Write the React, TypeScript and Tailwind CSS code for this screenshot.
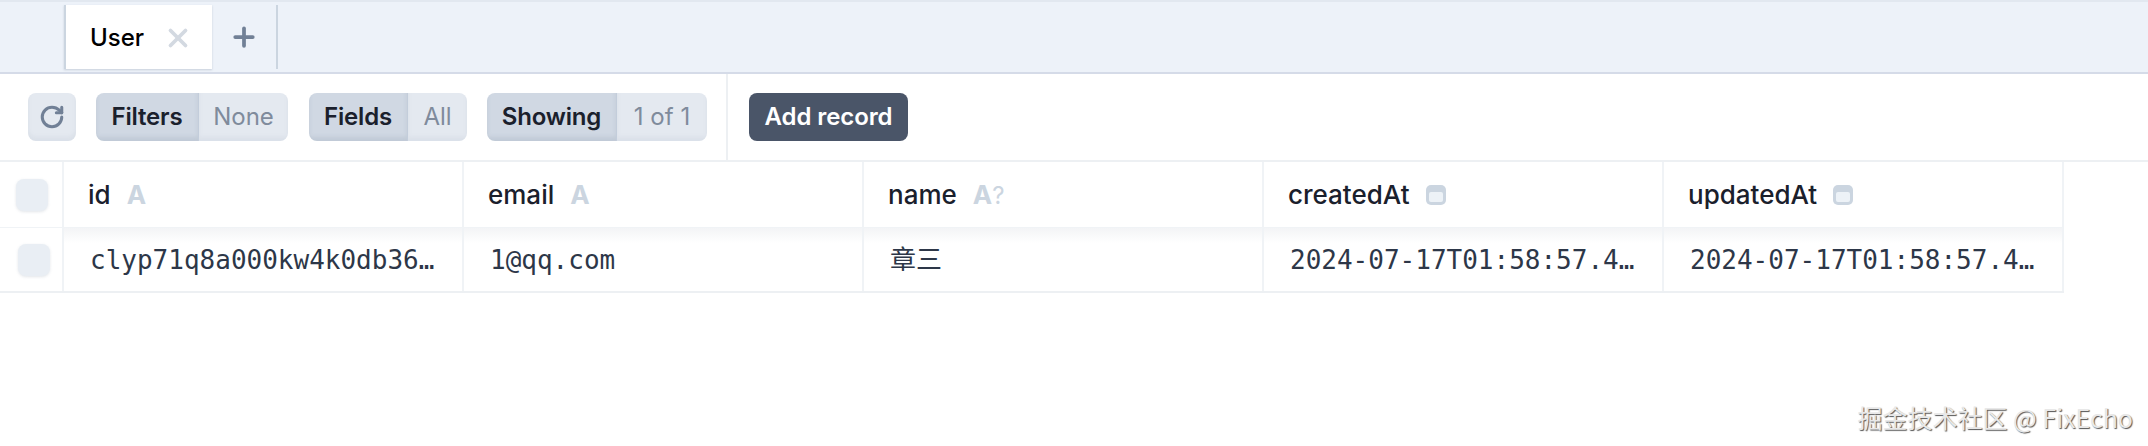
import { RotateCw, X, Plus } from 'lucide-react'

const sans = 'font-["Inter","Noto_Sans_CJK_SC",sans-serif]'

function Segment({ label, value, labelW, valueW }: { label: string; value: string; labelW: string; valueW: string }) {
  return (
    <div className="flex h-[48px] rounded-[8px] overflow-hidden text-[24px]">
      <div className={`${labelW} flex items-center justify-center font-semibold tracking-[-0.2px] text-[#1a202c] bg-[#d0d8e3] border-r border-[#c3cddb] shadow-[inset_0_-4px_4px_rgba(113,128,150,0.16)]`}>{label}</div>
      <div className={`${valueW} flex items-center justify-center text-[#7f8b9c] bg-[#e4e9f0] shadow-[inset_0_-4px_4px_rgba(113,128,150,0.08)]`}>{value}</div>
    </div>
  )
}

function TypeMark({ kind }: { kind: 'text' | 'optional' | 'date' }) {
  if (kind === 'date') {
    return (
      <svg width="20" height="20" viewBox="0 0 20 20" className="ml-[16px]">
        <rect x="0" y="0" width="20" height="20" rx="5" fill="#cbd5e0" />
        <rect x="3" y="7" width="14" height="10" rx="2" fill="#edf2f7" />
      </svg>
    )
  }
  return (
    <span className="ml-[16px] flex items-baseline font-bold text-[#cbd5e0]">
      A{kind === 'optional' && <span className="text-[24px] font-normal">?</span>}
    </span>
  )
}

const columns = [
  { name: 'id', kind: 'text' as const, value: 'clyp71q8a000kw4k0db36…' },
  { name: 'email', kind: 'text' as const, value: '1@qq.com' },
  { name: 'name', kind: 'optional' as const, value: '章三' },
  { name: 'createdAt', kind: 'date' as const, value: '2024-07-17T01:58:57.4…' },
  { name: 'updatedAt', kind: 'date' as const, value: '2024-07-17T01:58:57.4…' },
]

function Checkbox() {
  return <div className="w-[32px] h-[32px] rounded-[8px] bg-[#e9eef4] shadow-[0_1px_3px_rgba(113,128,150,0.2)]" />
}

export default function App() {
  return (
    <div className={`relative w-[2148px] h-[446px] bg-white overflow-hidden ${sans}`}>
      {/* tabs */}
      <div className="h-[74px] flex bg-[#edf2f9] border-t-[2px] border-t-[#e2e8f0] border-b-[2px] border-b-[#d5dbe8] pl-[64px]">
        <div className="w-[148px] mt-[3px] h-[64px] flex items-center bg-white border-l-[2px] border-[#cbd5e0] pl-[24px] pt-[2px] shadow-[0_1px_2px_rgba(113,128,150,0.3)]">
          <span className="text-[24px] font-medium text-black">User</span>
          <X size={30} strokeWidth={3} className="ml-[19px] text-[#d3d9e1]" />
        </div>
        <div className="w-[66px] mt-[3px] h-[64px] flex items-center justify-center border-r-[2px] border-[#cbd5e0]">
          <Plus size={30} strokeWidth={3} className="text-[#718096]" />
        </div>
      </div>

      {/* toolbar */}
      <div className="h-[88px] flex border-b-[2px] border-[#edf0f3]">
        <div className="w-[728px] shrink-0 flex items-center pl-[28px] border-r-[2px] border-[#edf0f3]">
          <div className="w-[48px] h-[48px] flex items-center justify-center rounded-[8px] bg-[#e4e9f0] shadow-[inset_0_-4px_4px_rgba(113,128,150,0.08)]">
            <RotateCw size={26} strokeWidth={2.8} className="text-[#718096]" />
          </div>
          <div className="ml-[20px]"><Segment label="Filters" value="None" labelW="w-[103px]" valueW="w-[89px]" /></div>
          <div className="ml-[21px]"><Segment label="Fields" value="All" labelW="w-[99px]" valueW="w-[59px]" /></div>
          <div className="ml-[20px]"><Segment label="Showing" value="1 of 1" labelW="w-[130px]" valueW="w-[90px]" /></div>
        </div>
        <div className="flex items-center pl-[21px]">
          <div className="w-[159px] h-[48px] flex items-center justify-center rounded-[8px] bg-[#4a5568] text-white text-[24px] font-semibold tracking-[-0.1px]">Add record</div>
        </div>
      </div>

      {/* table */}
      <div className="grid grid-cols-[64px_repeat(5,400px)] w-[2064px] border-b-[2px] border-[#edf0f3]">
        <div className="h-[66px] flex items-center pl-[16px] border-r-[2px] border-b-[1px] border-[#f0f3f6]"><Checkbox /></div>
        {columns.map((c) => (
          <div key={c.name} className="h-[66px] flex items-center pl-[24px] border-r-[2px] border-b-[1px] border-[#f0f3f6] text-[26px] font-[450] text-[#1a202c]">
            {c.name}
            <TypeMark kind={c.kind} />
          </div>
        ))}
        <div className="h-[63px] flex items-center pl-[18px] border-r-[2px] border-[#f0f3f6]"><Checkbox /></div>
        {columns.map((c) => (
          <div key={c.name} className="h-[63px] flex items-center pl-[26px] pt-[1px] border-r-[2px] border-[#f0f3f6] bg-gradient-to-b from-[#f3f4f6] to-white to-[24%]">
            <span className='text-[26px] text-[#2d3748] font-["DejaVu_Sans_Mono","Noto_Sans_CJK_SC",monospace]'>{c.value}</span>
          </div>
        ))}
      </div>

      {/* watermark */}
      <div className='absolute right-[15px] bottom-[10px] text-[25px] text-[#e8e8e8] [text-shadow:1px_1px_1px_#555] font-["Noto_Sans_CJK_SC",sans-serif]'>
        掘金技术社区 @ FixEcho
      </div>
    </div>
  )
}
